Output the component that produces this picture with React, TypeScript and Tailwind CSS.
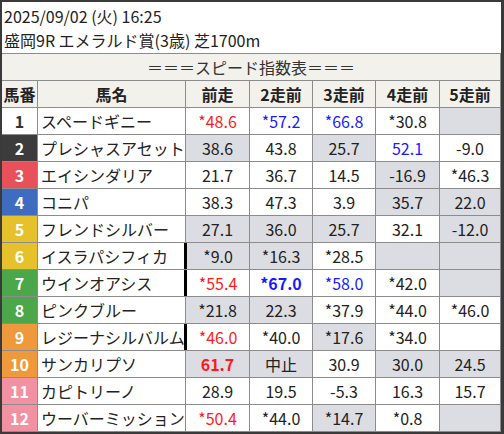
import React from 'react';

type Cell = { v: string; gray?: boolean; color?: 'red' | 'blue'; bold?: boolean };

type Horse = {
  no: number;
  name: string;
  frame: string;
  numText: string;
  thick?: boolean;
  cells: Cell[];
};

const c = (v: string, gray = false, color?: 'red' | 'blue', bold = false): Cell => ({ v, gray, color, bold });

const horses: Horse[] = [
  { no: 1, name: 'スペードギニー', frame: 'bg-white', numText: 'text-[#333]', cells: [c('*48.6', false, 'red'), c('*57.2', false, 'blue'), c('*66.8', false, 'blue'), c('*30.8'), c('', true)] },
  { no: 2, name: 'プレシャスアセット', frame: 'bg-[#3c3c3c]', numText: 'text-white', cells: [c('38.6', true), c('43.8'), c('25.7', true), c('52.1', false, 'blue'), c('-9.0')] },
  { no: 3, name: 'エイシンダリア', frame: 'bg-[#e8505a]', numText: 'text-white', cells: [c('21.7'), c('36.7'), c('14.5'), c('-16.9', true), c('*46.3')] },
  { no: 4, name: 'コニパ', frame: 'bg-[#3e6cc0]', numText: 'text-white', cells: [c('38.3'), c('47.3'), c('3.9'), c('35.7', true), c('22.0', true)] },
  { no: 5, name: 'フレンドシルバー', frame: 'bg-[#e6c12c]', numText: 'text-white', cells: [c('27.1', true), c('36.0', true), c('25.7', true), c('32.1'), c('-12.0', true)] },
  { no: 6, name: 'イスラパシフィカ', frame: 'bg-[#e6c12c]', numText: 'text-white', thick: true, cells: [c('*9.0', true), c('*16.3', true), c('*28.5'), c('', true), c('', true)] },
  { no: 7, name: 'ウインオアシス', frame: 'bg-[#4ca64a]', numText: 'text-white', thick: true, cells: [c('*55.4', false, 'red'), c('*67.0', false, 'blue', true), c('*58.0', false, 'blue'), c('*42.0'), c('', true)] },
  { no: 8, name: 'ピンクブルー', frame: 'bg-[#4ca64a]', numText: 'text-white', cells: [c('*21.8', true), c('22.3', true), c('*37.9'), c('*44.0'), c('*46.0')] },
  { no: 9, name: 'レジーナシルバルム', frame: 'bg-[#f0993c]', numText: 'text-white', thick: true, cells: [c('*46.0', false, 'red'), c('*40.0'), c('*17.6', true), c('*34.0'), c('')] },
  { no: 10, name: 'サンカリプソ', frame: 'bg-[#f0993c]', numText: 'text-white', cells: [c('61.7', true, 'red', true), c('中止', true), c('30.9'), c('30.0', true), c('24.5', true)] },
  { no: 11, name: 'カピトリーノ', frame: 'bg-[#f291a2]', numText: 'text-white', cells: [c('28.9'), c('19.5'), c('-5.3'), c('16.3'), c('15.7')] },
  { no: 12, name: 'ウーバーミッション', frame: 'bg-[#f291a2]', numText: 'text-white', cells: [c('*50.4', false, 'red'), c('*44.0'), c('*14.7', true), c('*0.8'), c('', true)] },
];

const widths = ['w-[64px]', 'w-[63px]', 'w-[63px]', 'w-[64px]', 'w-[61px]'];
const heads = ['前走', '2走前', '3走前', '4走前', '5走前'];

const App: React.FC = () => {
  return (
    <div
      className="w-[504px] h-[434px] bg-white border-t-2 border-l-2 border-r-[3px] border-b-2 border-[#3a3a3a] text-[#222] text-[16px] overflow-hidden"
      style={{ fontFamily: '"Noto Sans CJK JP", "Noto Sans", sans-serif' }}
    >
      <div className="h-[52px] pt-[2px] pl-[2px] border-b border-[#8c8c8c] leading-[24px]">
        <div>2025/09/02 (火) 16:25</div>
        <div>盛岡9R エメラルド賞(3歳) 芝1700m</div>
      </div>

      <div className="h-[27px] border-b border-r border-[#8c8c8c] bg-[#f2f1ec] flex items-center justify-center text-[#333]">
        ＝＝＝スピード指数表＝＝＝
      </div>

      <div className="h-[27px] flex border-b border-[#8c8c8c] bg-[#f2f1ec] font-bold">
        <div className="w-[36px] border-r border-[#8c8c8c] flex items-center justify-center">馬番</div>
        <div className="w-[148px] border-r border-[#8c8c8c] flex items-center justify-center">馬名</div>
        {heads.map((h, i) => (
          <div key={h} className={`${widths[i]} border-r border-[#8c8c8c] flex items-center justify-center`}>
            {h}
          </div>
        ))}
      </div>

      {horses.map((h) => (
        <div key={h.no} className="h-[27px] flex border-b border-[#8c8c8c]">
          <div className={`w-[36px] border-r border-[#8c8c8c] flex items-center justify-center font-bold ${h.frame} ${h.numText}`}>
            {h.no}
          </div>
          <div
            className={`w-[148px] flex items-center pl-[3px] whitespace-nowrap ${
              h.thick ? 'border-r-2 border-black' : 'border-r border-[#8c8c8c]'
            }`}
          >
            {h.name}
          </div>
          {h.cells.map((cell, i) => (
            <div
              key={i}
              className={`${widths[i]} border-r border-[#8c8c8c] flex items-center justify-center ${
                cell.gray ? 'bg-[#dcdde2]' : 'bg-white'
              } ${cell.color === 'red' ? 'text-[#ff1a1a]' : cell.color === 'blue' ? 'text-[#1a1aff]' : ''} ${
                cell.bold ? 'font-bold' : ''
              } ${i === 0 && h.thick ? 'border-l border-l-black' : ''}`}
            >
              {cell.v}
            </div>
          ))}
        </div>
      ))}
    </div>
  );
};

export default App;
